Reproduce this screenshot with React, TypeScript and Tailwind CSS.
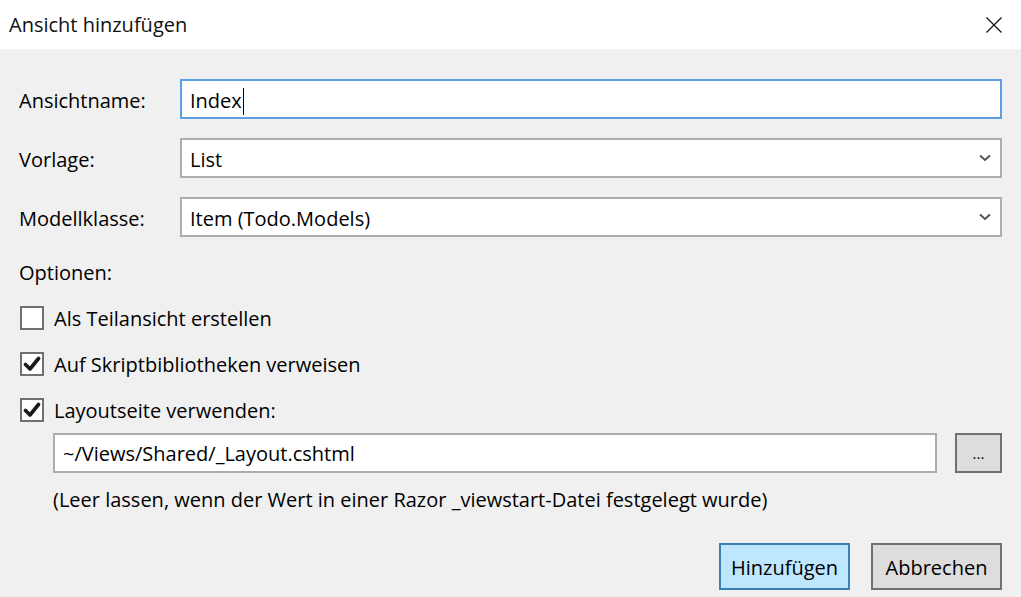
import React from "react";

const font = { fontFamily: '"Open Sans", "Noto Sans", sans-serif' };

function Chevron() {
  return (
    <svg width="12" height="8" viewBox="0 0 12 8" className="shrink-0">
      <path d="M1 1.5 L6 6 L11 1.5" fill="none" stroke="#555" strokeWidth="2" />
    </svg>
  );
}

function Check({ checked }: { checked: boolean }) {
  return (
    <div className="w-[24px] h-[24px] border-2 border-[#707070] bg-white flex items-center justify-center shrink-0">
      {checked && (
        <svg width="18" height="16" viewBox="0 0 18 16">
          <path d="M2.5 8.5 L7 13 L15.5 2.5" fill="none" stroke="#1a1a1a" strokeWidth="3.6" strokeLinecap="round" strokeLinejoin="round" />
        </svg>
      )}
    </div>
  );
}

export default function App() {
  return (
    <div className="w-[1021px] h-[597px] bg-[#f0f0f0] text-black flex flex-col overflow-hidden text-[20px]" style={font}>
      <div className="h-[49px] bg-white flex items-center justify-between pl-[9px] pr-[19px] shrink-0">
        <span className="text-[20px] text-[#111]">Ansicht hinzufügen</span>
        <svg width="16" height="16" viewBox="0 0 16 16">
          <path d="M0.5 0.5 L15.5 15.5 M15.5 0.5 L0.5 15.5" stroke="#111" strokeWidth="1.2" />
        </svg>
      </div>
      <div className="flex flex-col pl-[19px] pr-[19px] pt-[30px]">
        <div className="flex items-center h-[40px]">
          <span className="w-[161px] shrink-0 mt-[4px]">Ansichtname:</span>
          <div className="flex-1 h-[40px] border-2 border-[#5c9fe4] bg-white flex items-center pl-[8px]">
            <span className="mt-[4px]">Index</span>
            <span className="w-[1px] h-[27px] bg-black ml-[1px] mt-[4px]" />
          </div>
        </div>
        <div className="flex items-center h-[40px] mt-[19px]">
          <span className="w-[161px] shrink-0 mt-[4px]">Vorlage:</span>
          <div className="flex-1 h-[40px] border-2 border-[#adadad] bg-white flex items-center justify-between pl-[8px] pr-[9px]">
            <span className="mt-[4px]">List</span>
            <Chevron />
          </div>
        </div>
        <div className="flex items-center h-[40px] mt-[19px]">
          <span className="w-[161px] shrink-0 mt-[4px]">Modellklasse:</span>
          <div className="flex-1 h-[40px] border-2 border-[#adadad] bg-white flex items-center justify-between pl-[8px] pr-[9px]">
            <span className="mt-[4px]">Item (Todo.Models)</span>
            <Chevron />
          </div>
        </div>
        <div className="flex items-center h-[40px] mt-[15px]">
          <span className="mt-[2px]">Optionen:</span>
        </div>
        <div className="flex items-center h-[46px] mt-[3px] pl-[1px] gap-[10px]">
          <Check checked={false} />
          <span className="mt-[2px]">Als Teilansicht erstellen</span>
        </div>
        <div className="flex items-center h-[46px] pl-[1px] gap-[10px]">
          <Check checked={true} />
          <span className="mt-[2px]">Auf Skriptbibliotheken verweisen</span>
        </div>
        <div className="flex items-center h-[45px] pl-[1px] gap-[10px]">
          <Check checked={true} />
          <span className="mt-[2px]">Layoutseite verwenden:</span>
        </div>
        <div className="flex items-center h-[40px] mt-[1px] pl-[34px] gap-[18px]">
          <div className="flex-1 h-[40px] border-2 border-[#adadad] bg-white flex items-center pl-[8px]">
            <span className="mt-[2px]">~/Views/Shared/_Layout.cshtml</span>
          </div>
          <div className="w-[47px] h-[40px] border-2 border-[#707070] bg-[#dddddd] flex items-center justify-center shrink-0">
            <span className="text-[15px] leading-none">...</span>
          </div>
        </div>
        <div className="flex items-center h-[50px] pl-[34px]">
          <span className="mt-[4px]">(Leer lassen, wenn der Wert in einer Razor _viewstart-Datei festgelegt wurde)</span>
        </div>
        <div className="flex justify-end items-center mt-[20px] gap-[21px]">
          <div className="w-[131px] h-[47px] border-2 border-[#3c7fb1] bg-[#bee6fd] flex items-center justify-center">
            <span className="mt-[2px]">Hinzufügen</span>
          </div>
          <div className="w-[131px] h-[47px] border-2 border-[#707070] bg-[#dddddd] flex items-center justify-center">
            <span className="mt-[2px]">Abbrechen</span>
          </div>
        </div>
      </div>
    </div>
  );
}
